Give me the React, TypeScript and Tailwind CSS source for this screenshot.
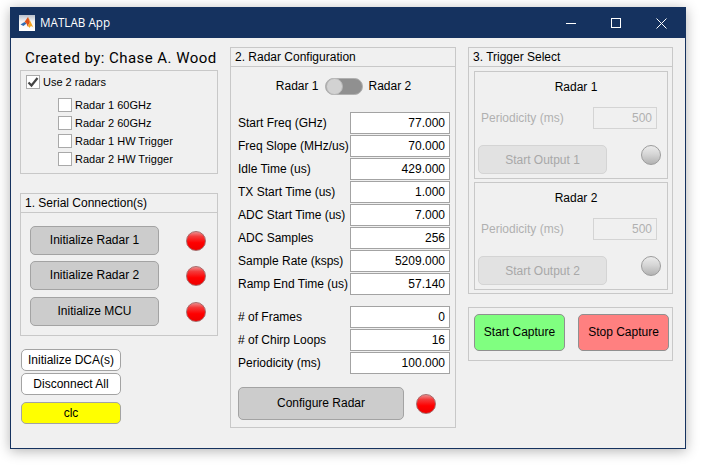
import React from 'react';

const Lamp = ({ on = true }: { on?: boolean }) => (
  <span
    className={
      on
        ? 'block w-5 h-5 rounded-full border border-[#a86a6a] bg-[linear-gradient(180deg,#ec8c8c_0%,#f43a3a_25%,#ff0000_60%,#ee0000_100%)]'
        : 'block w-5 h-5 rounded-full border border-[#9c9c9c] bg-[linear-gradient(180deg,#ebebeb_0%,#d6d6d6_45%,#b2b2b2_100%)]'
    }
  />
);

const Gray = ({ children, className }: { children: React.ReactNode; className: string }) => (
  <div className={'flex items-center justify-center rounded-[5px] border border-[#a3a3a3] bg-[#cccccc] pb-[1px] ' + className}>
    {children}
  </div>
);

const Small = ({ children, className }: { children: React.ReactNode; className: string }) => (
  <div className={'flex items-center justify-center w-[100px] h-[22px] rounded-[5px] border border-[#a3a3a3] pb-[1px] ' + className}>
    {children}
  </div>
);

const Box = ({ label }: { label: string }) => (
  <div className="flex items-center h-[18px]">
    <span className="w-[14px] h-[14px] border border-[#a9a9a9] bg-white" />
    <span className="ml-[3px] text-[11px]">{label}</span>
  </div>
);

const Field = ({ label, value }: { label: string; value: string }) => (
  <div className="flex items-center h-[23px] pl-[7px]">
    <span className="w-[112px] whitespace-nowrap">{label}</span>
    <span className="w-[100px] h-[22px] border border-[#a3a3a3] bg-white text-right pr-[4px] leading-[21px]">{value}</span>
  </div>
);

const Header = ({ title }: { title: string }) => (
  <div className="h-[19px] border-b border-[#c8c8c8] pl-[4px] leading-[18px] whitespace-nowrap">{title}</div>
);

const Trigger = ({ radar, output, className }: { radar: string; output: string; className: string }) => (
  <div className={'w-[194px] h-[108px] border border-[#c8c8c8] ' + className}>
    <div className="text-center pt-[6px] h-[35px] pl-[10px]">{radar}</div>
    <div className="flex items-center h-[22px] pl-[6px] text-[#b0b0b0]">
      <span className="w-[112px]">Periodicity (ms)</span>
      <span className="w-[64px] h-[22px] border border-[#d4d4d4] text-right pr-[4px] leading-[21px]">500</span>
    </div>
    <div className="flex items-start pl-[3px] pt-[16px] text-[#a8a8a8]">
      <div className="flex items-center justify-center w-[129px] h-[29px] rounded-[5px] border border-[#d4d4d4] bg-[#e2e2e2]">
        {output}
      </div>
      <span className="ml-[34px]">
        <Lamp on={false} />
      </span>
    </div>
  </div>
);

export default function App() {
  return (
    <div className="w-[705px] h-[465px] bg-white pt-[7px] pl-[10px] font-['Liberation_Sans',sans-serif] text-[12px] text-black overflow-hidden">
      <div className="w-[676px] h-[442px] border border-[#15325f] bg-[#f0f0f0] shadow-[0_2px_12px_rgba(0,0,0,0.3)]">
        {/* title bar */}
        <div className="flex items-center h-[30px] bg-[#15325f] text-white pl-[8px]">
          <span className="flex items-center justify-center w-[16px] h-[16px] bg-[linear-gradient(180deg,#b8c0cc_0%,#f4f4f4_40%,#ffffff_100%)]">
            <svg width="14" height="14" viewBox="0 0 14 14">
              <path d="M0.5 8.5 L4.5 6 L6.5 7.5 L3.5 10 Z" fill="#2f6db5" />
              <path d="M4.5 6 L8 1 L10 6 L7.5 10.5 L6.5 7.5 Z" fill="#e0521a" />
              <path d="M8 1 C9.5 3 12 9 13.5 11.5 C11.5 10 10.5 9.5 9.5 12 C9 10.5 8.5 10.5 7.5 10.5 L10 6 Z" fill="#f5a623" />
            </svg>
          </span>
          <span className="ml-[5px] font-['Open_Sans',sans-serif] text-[11.7px] pb-[1px]">MATLAB App</span>
          <div className="ml-auto flex items-center h-full">
            {/* window buttons */}
            <svg width="10" height="1" viewBox="0 0 10 1" className="mr-[35px]" shapeRendering="crispEdges">
              <rect width="10" height="1" fill="#fff" />
            </svg>
            <svg width="10" height="10" viewBox="0 0 10 10" className="mr-[35px]" shapeRendering="crispEdges">
              <rect x="0.5" y="0.5" width="9" height="9" fill="none" stroke="#fff" />
            </svg>
            <svg width="11" height="11" viewBox="0 0 11 11" className="mr-[18px]">
              <path d="M0.5 0.5 L10.5 10.5 M10.5 0.5 L0.5 10.5" stroke="#fff" strokeWidth="1" fill="none" />
            </svg>
          </div>
        </div>

        <div className="flex pl-[9px] pt-[9px]">
          {/* left column */}
          <div className="w-[198px]">
            <div className="h-[23px] pl-[5px] font-['Roboto',sans-serif] text-[15px] font-[450] tracking-[0.45px] whitespace-nowrap leading-[23px]">Created by: Chase A. Wood</div>
            <div className="h-[104px] border border-[#c8c8c8] pl-[5px] pt-[4px]">
              <div className="flex items-center h-[14px]">
                <span className="flex items-center justify-center w-[14px] h-[14px] border border-[#a9a9a9] bg-white">
                  <svg width="12" height="12" viewBox="0 0 12 12">
                    <path d="M1.5 6.5 L4.5 9.5 L10.5 2" stroke="#444" strokeWidth="2.2" fill="none" />
                  </svg>
                </span>
                <span className="ml-[3px] text-[11px]">Use 2 radars</span>
              </div>
              <div className="pl-[32px] pt-[7px]">
                <Box label="Radar 1 60GHz" />
                <Box label="Radar 2 60GHz" />
                <Box label="Radar 1 HW Trigger" />
                <Box label="Radar 2 HW Trigger" />
              </div>
            </div>

            <div className="mt-[19px] h-[143px] border border-[#c8c8c8]">
              <Header title="1. Serial Connection(s)" />
              <div className="pl-[9px] pt-[13px]">
                <div className="flex items-center">
                  <Gray className="w-[129px] h-[29px]">Initialize Radar 1</Gray>
                  <span className="ml-[27px]"><Lamp /></span>
                </div>
                <div className="flex items-center mt-[6px]">
                  <Gray className="w-[129px] h-[29px]">Initialize Radar 2</Gray>
                  <span className="ml-[27px]"><Lamp /></span>
                </div>
                <div className="flex items-center mt-[7px]">
                  <Gray className="w-[129px] h-[29px]">Initialize MCU</Gray>
                  <span className="ml-[27px]"><Lamp /></span>
                </div>
              </div>
            </div>

            <div className="pl-[1px] pt-[13px]">
              <Small className="bg-white">Initialize DCA(s)</Small>
              <Small className="bg-white mt-[2px]">Disconnect All</Small>
              <Small className="bg-[#ffff00] mt-[7px]">clc</Small>
            </div>
          </div>

          {/* radar config */}
          <div className="ml-[12px] w-[226px] h-[381px] border border-[#c8c8c8]">
            <Header title="2. Radar Configuration" />
            <div className="flex items-center justify-center h-[28px] mt-[5px] pl-[1px]">
              <span>Radar 1</span>
              <span className="mx-[6px] flex items-center w-[38px] h-[17px] rounded-full border border-[#b0b0b0] bg-[#909090]">
                <span className="w-[17px] h-[17px] rounded-full bg-[#d2d2d2] border border-[#b8b8b8]" />
              </span>
              <span>Radar 2</span>
            </div>
            <div className="mt-[11px]">
              <Field label="Start Freq (GHz)" value="77.000" />
              <Field label="Freq Slope (MHz/us)" value="70.000" />
              <Field label="Idle Time (us)" value="429.000" />
              <Field label="TX Start Time (us)" value="1.000" />
              <Field label="ADC Start Time (us)" value="7.000" />
              <Field label="ADC Samples" value="256" />
              <Field label="Sample Rate (ksps)" value="5209.000" />
              <Field label="Ramp End Time (us)" value="57.140" />
            </div>
            <div className="mt-[10px]">
              <Field label="# of Frames" value="0" />
              <Field label="# of Chirp Loops" value="16" />
              <Field label="Periodicity (ms)" value="100.000" />
            </div>
            <div className="flex items-center pl-[7px] mt-[13px]">
              <Gray className="w-[166px] h-[33px]">Configure Radar</Gray>
              <span className="ml-[12px]"><Lamp /></span>
            </div>
          </div>

          {/* trigger */}
          <div className="ml-[12px] w-[205px]">
            <div className="h-[247px] border border-[#c8c8c8]">
              <Header title="3. Trigger Select" />
              <Trigger radar="Radar 1" output="Start Output 1" className="ml-[5px] mt-[4px]" />
              <Trigger radar="Radar 2" output="Start Output 2" className="ml-[5px] mt-[3px]" />
            </div>
            <div className="flex mt-[13px] h-[54px] border border-[#c8c8c8] pl-[5px] pt-[6px]">
              <div className="flex items-center justify-center w-[91px] h-[37px] rounded-[5px] border border-[#909090] bg-[#80ff80] pb-[2px]">Start Capture</div>
              <div className="flex items-center justify-center ml-[13px] w-[91px] h-[37px] rounded-[5px] border border-[#909090] bg-[#ff8080] pb-[2px]">Stop Capture</div>
            </div>
          </div>
        </div>
      </div>
    </div>
  );
}
